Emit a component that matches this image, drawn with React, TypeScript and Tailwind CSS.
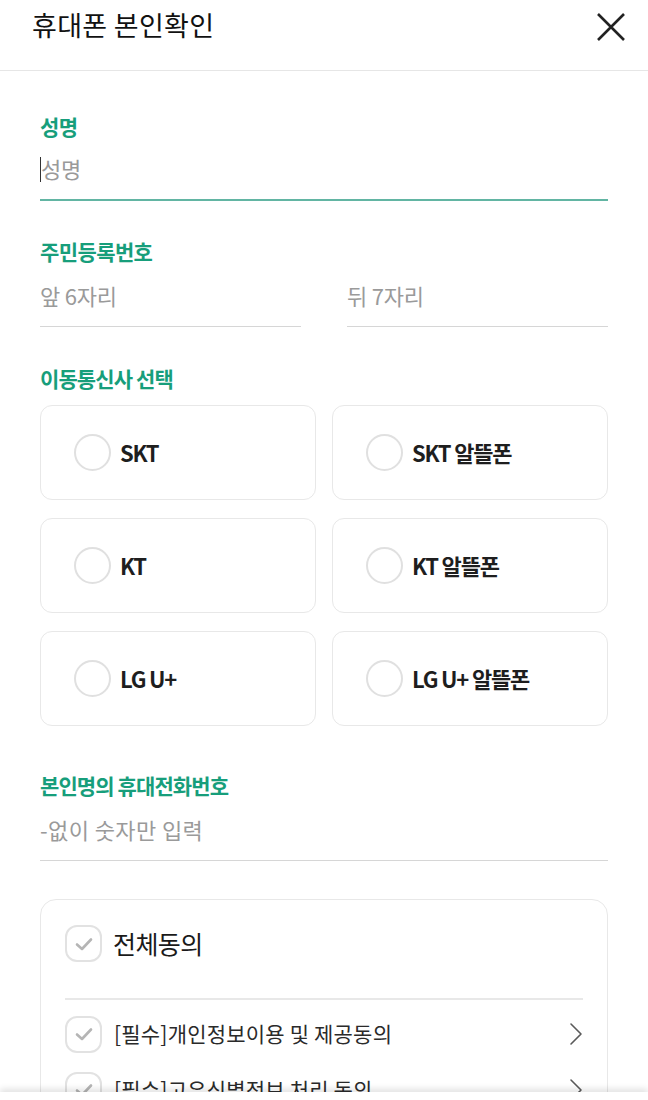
import React from 'react';

const font = { fontFamily: '"Noto Sans CJK KR", "Noto Sans", sans-serif' };

const carriers = ['SKT', 'SKT 알뜰폰', 'KT', 'KT 알뜰폰', 'LG U+', 'LG U+ 알뜰폰'];

const Check = () => (
  <span className="w-[37px] h-[37px] shrink-0 rounded-[12px] border-2 border-[#e2e2e2] flex items-center justify-center">
    <svg width="18" height="14" viewBox="0 0 18 14" fill="none">
      <path d="M2 7.5 L7 12 L16 2.5" stroke="#b5b5b5" strokeWidth="2.6" strokeLinecap="round" strokeLinejoin="round" />
    </svg>
  </span>
);

const Chevron = () => (
  <svg width="14" height="24" viewBox="0 0 14 24" fill="none" className="shrink-0">
    <path d="M2 2 L12 12 L2 22" stroke="#5a5a5a" strokeWidth="1.6" strokeLinecap="round" strokeLinejoin="round" />
  </svg>
);

export default function App() {
  return (
    <div className="min-h-screen bg-white text-[#222]" style={font}>
      {/* Header */}
      <header className="h-[71px] flex items-center justify-between pl-8 pr-[22px] border-b border-[#e6e6e6]">
        <h1 className="text-[27px] tracking-[0.3px] text-[#111] -mt-[20px]">휴대폰 본인확인</h1>
        <button className="-mt-[16px]">
          <svg width="30" height="30" viewBox="0 0 30 30">
            <path d="M2 2 L28 28 M28 2 L2 28" stroke="#222" strokeWidth="2.6" />
          </svg>
        </button>
      </header>

      <main className="px-10 pt-[40px]">
        {/* Name */}
        <label className="block text-[21px] font-bold text-[#179e7b] tracking-[-0.6px] leading-[30px]">성명</label>
        <div className="mt-[12px] h-[48px] border-b-2 border-[#62b5a3] flex items-start">
          <span className="w-px h-[25px] bg-[#333] mt-[4px]" />
          <span className="text-[22px] text-[#9a9a9a] tracking-[-0.3px] leading-[30px]">성명</span>
        </div>

        {/* RRN */}
        <label className="block mt-[35px] text-[21px] font-bold text-[#179e7b] tracking-[-0.6px] leading-[30px]">주민등록번호</label>
        <div className="mt-[14px] grid grid-cols-2 gap-[46px]">
          <div className="h-[47px] border-b border-[#d6d6d6] text-[22px] text-[#9a9a9a] tracking-[-0.2px] leading-[30px]">앞 6자리</div>
          <div className="h-[47px] border-b border-[#d6d6d6] text-[22px] text-[#9a9a9a] tracking-[-0.2px] leading-[30px]">뒤 7자리</div>
        </div>

        {/* Carrier */}
        <label className="block mt-[36px] text-[21px] font-bold text-[#179e7b] tracking-[-0.9px] leading-[30px]">이동통신사 선택</label>
        <div className="mt-[12px] grid grid-cols-2 gap-x-[16px] gap-y-[18px]">
          {carriers.map((c) => (
            <div key={c} className="h-[95px] rounded-[12px] border border-[#e8e8e8] flex items-center pl-[33px] gap-[9px]">
              <span className="w-[37px] h-[37px] rounded-full border-2 border-[#e0e0e0]" />
              <span className="text-[22px] font-bold tracking-[-1.2px] text-[#1e1e1e]">{c}</span>
            </div>
          ))}
        </div>

        {/* Phone */}
        <label className="block mt-[44px] text-[21px] font-bold text-[#179e7b] tracking-[-0.9px] leading-[30px]">본인명의 휴대전화번호</label>
        <div className="mt-[14px] h-[47px] border-b border-[#d6d6d6] text-[22px] text-[#9a9a9a] tracking-[0.4px] leading-[30px]">-없이 숫자만 입력</div>

        {/* Agreements */}
        <div className="mt-[38px] rounded-[16px] border border-[#e8e8e8] px-[24px] pt-[25px] pb-6">
          <div className="flex items-center gap-[11px] pb-[35px] border-b-2 border-[#e8e8e8]">
            <Check />
            <span className="text-[25px] tracking-[-0.6px] text-[#1a1a1a]">전체동의</span>
          </div>
          <div className="pt-[16px] flex flex-col gap-[19px]">
            {['[필수]개인정보이용 및 제공동의', '[필수]고유식별정보 처리 동의', '[필수]통신사 이용약관 동의'].map((t) => (
              <div key={t} className="flex items-center gap-[12px]">
                <Check />
                <span className="flex-1 text-[21px] tracking-[0.2px] text-[#2a2a2a]">{t}</span>
                <Chevron />
              </div>
            ))}
          </div>
        </div>
        <div className="h-20" />
      </main>

      {/* bottom bar */}
      <div className="fixed left-0 right-0 bottom-0 h-[8px] bg-white shadow-[0_-3px_6px_rgba(0,0,0,0.12)]" />
    </div>
  );
}
